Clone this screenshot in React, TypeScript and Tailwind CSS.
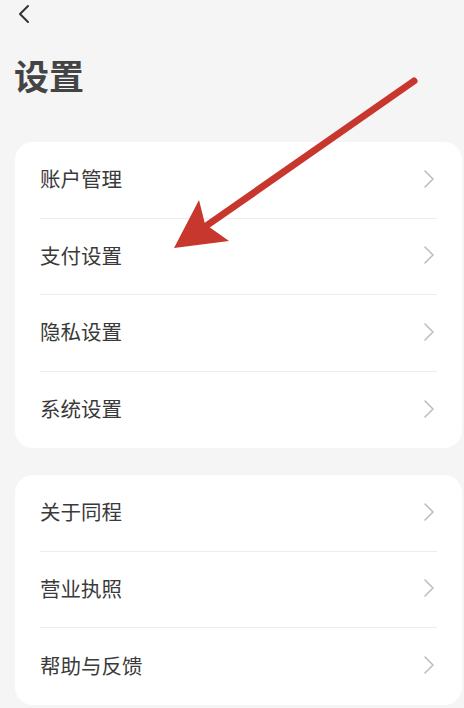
const groups = [
  ["账户管理", "支付设置", "隐私设置", "系统设置"],
  ["关于同程", "营业执照", "帮助与反馈"],
];

function Chevron() {
  return (
    <svg width="12" height="20" viewBox="0 0 12 20" fill="none" className="shrink-0">
      <path d="M2 2l8 8-8 8" stroke="#bdbdbd" strokeWidth="1.6" strokeLinecap="round" strokeLinejoin="round" />
    </svg>
  );
}

export default function App() {
  return (
    <div
      className="relative w-[464px] h-[708px] overflow-hidden bg-[#f5f5f5]"
      style={{ fontFamily: '"Noto Sans CJK SC", "Noto Sans", sans-serif' }}
    >
      <div className="h-[28px] pl-[16px] pt-[4px]">
        <svg width="16" height="20" viewBox="0 0 16 20" fill="none">
          <path d="M12 2L4 10l8 8" stroke="#333" strokeWidth="2" strokeLinecap="round" strokeLinejoin="round" />
        </svg>
      </div>
      <div className="h-[114px] pl-[14px] pt-[24px]">
        <h1 className="text-[35px] leading-[46px] font-bold text-[#444]">设置</h1>
      </div>

      <div className="flex flex-col gap-[27px] pl-[15px] pr-[2px]">
        {groups.map((items, gi) => (
          <div key={gi} className="bg-white rounded-[18px] px-[25px]">
            {items.map((label, i) => (
              <div
                key={label}
                className={`flex items-center justify-between h-[76.5px] pr-[2px] pb-[2px] ${
                  i < items.length - 1 ? "border-b border-[#ececec]" : ""
                }`}
              >
                <span className="text-[20.5px] text-[#3a3a3a]">{label}</span>
                <Chevron />
              </div>
            ))}
          </div>
        ))}
      </div>

      <svg
        className="absolute inset-0 pointer-events-none"
        width="464"
        height="708"
        viewBox="0 0 464 708"
      >
        <line x1="414" y1="81" x2="206" y2="226" stroke="#c8372d" strokeWidth="7" strokeLinecap="round" />
        <polygon points="174,248 199,200 205,224 229,241" fill="#c8372d" />
      </svg>
    </div>
  );
}
